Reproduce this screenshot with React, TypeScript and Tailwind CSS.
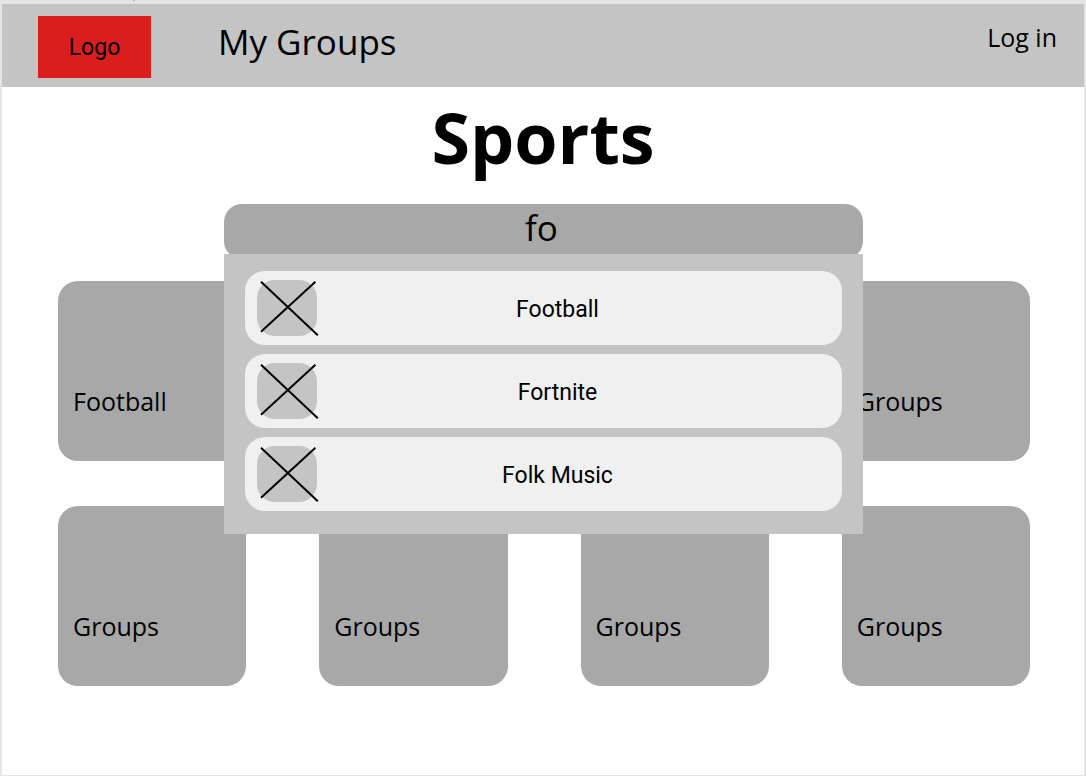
import { useState } from "react";

const results = ["Football", "Fortnite", "Folk Music"];

const groups = ["Football", "Groups", "Groups", "Groups", "Groups", "Groups", "Groups", "Groups"];

function Placeholder() {
  return (
    <span className="relative block h-14 w-[60px] shrink-0 rounded-[18px] bg-[#c4c4c4]">
      <svg
        viewBox="0 0 64 60"
        className="absolute left-0 top-0 h-[60px] w-16"
        fill="none"
        stroke="#000"
        strokeWidth="2"
        aria-hidden="true"
      >
        <path d="M4 1.7 60.8 55.2M58.4 1.7 4 51.8" />
      </svg>
    </span>
  );
}

export default function App() {
  const [query, setQuery] = useState("fo");

  return (
    <div className="flex min-h-screen flex-col bg-[#e5e5e5] pb-px pl-[2px] pr-[2px] font-['Open_Sans',sans-serif] text-black">
      <div className="h-1">
        <div className="ml-[131px] h-px w-[2px] bg-[#b3b3b3]" />
      </div>

      <header className="flex h-[83px] items-start bg-[#c4c4c4] pl-9 pr-[27px]">
        <a
          href="#"
          className="mt-3 flex h-[62px] w-[113px] items-center justify-center bg-[#da1e1e] pt-px font-['Roboto',sans-serif] text-[23px] leading-7"
        >
          Logo
        </a>
        <a href="#groups" className="ml-[67px] mt-3 text-[35px] leading-[52px]">
          My Groups
        </a>
        <button type="button" className="ml-auto mt-[15px] text-[25px] leading-9">
          Log in
        </button>
      </header>

      <main className="flex-1 bg-white pb-[89px]">
        <h1 className="pt-px text-center text-[70px] font-bold leading-[98px]">Sports</h1>

        <div className="relative ml-[222px] mr-[221px] mt-[18px]">
          <input
            type="text"
            aria-label="Search groups"
            value={query}
            onChange={(event) => setQuery(event.target.value)}
            className="block h-[55px] w-full rounded-[18px] bg-[#a8a8a8] pb-2 pr-1 text-center text-[35px] leading-[46px] outline-none"
          />
          <ul className="absolute left-0 top-[50px] z-10 flex w-full flex-col gap-[9px] bg-[#c4c4c4] px-[21px] pb-[23px] pt-[17px]">
            {results.map((name) => (
              <li key={name}>
                <button
                  type="button"
                  className="flex h-[74px] w-full items-center rounded-[20px] bg-[#f0f0f0] pl-3 pr-11 font-['Roboto',sans-serif] text-[23px] leading-7"
                >
                  <Placeholder />
                  <span className="flex-1 pt-[3px] text-center">{name}</span>
                </button>
              </li>
            ))}
          </ul>
        </div>

        <section
          id="groups"
          className="mt-[22px] grid grid-cols-4 gap-x-[73px] gap-y-[45px] pl-14 pr-[54px]"
        >
          {groups.map((name, index) => (
            <a
              key={index}
              href="#"
              className="flex h-[180px] items-end rounded-[20px] bg-[#a8a8a8] px-[15px] pb-[42px] text-[25px] leading-9"
            >
              {name}
            </a>
          ))}
        </section>
      </main>
    </div>
  );
}
